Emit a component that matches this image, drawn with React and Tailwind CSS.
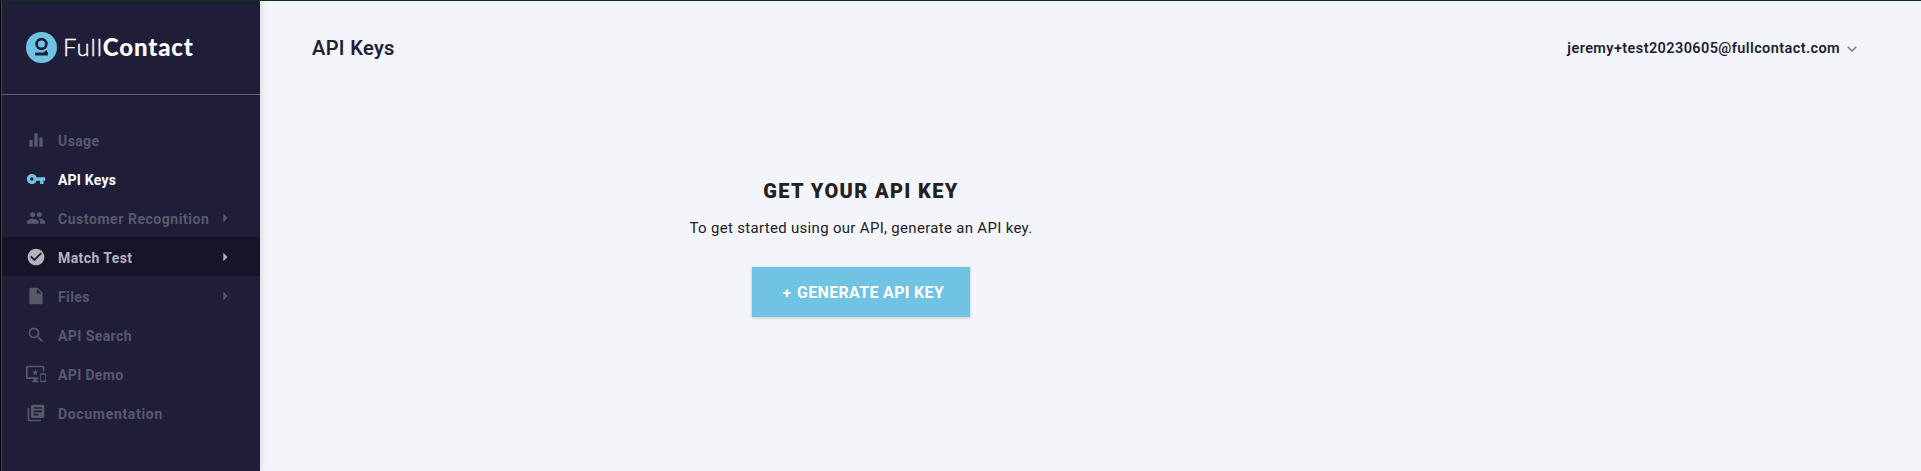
import React from "react";
import {
  MdEqualizer,
  MdVpnKey,
  MdPeople,
  MdCheckCircle,
  MdInsertDriveFile,
  MdSearch,
  MdImportantDevices,
  MdLibraryBooks,
  MdArrowRight,
} from "react-icons/md";

const items = [
  { label: "Usage", Icon: MdEqualizer, spacing: "tracking-[0.4px]" },
  { label: "API Keys", Icon: MdVpnKey, active: true, spacing: "tracking-[0.2px]" },
  { label: "Customer Recognition", Icon: MdPeople, arrow: true, spacing: "tracking-[0.55px]" },
  { label: "Match Test", Icon: MdCheckCircle, arrow: true, hover: true, spacing: "tracking-[0.42px]" },
  { label: "Files", Icon: MdInsertDriveFile, arrow: true, spacing: "tracking-[0.4px]" },
  { label: "API Search", Icon: MdSearch, spacing: "tracking-[0.42px]" },
  { label: "API Demo", Icon: MdImportantDevices, spacing: "tracking-[0.35px]" },
  { label: "Documentation", Icon: MdLibraryBooks, spacing: "tracking-[0.68px]" },
];

function Logo() {
  return (
    <div className="flex h-[93px] items-center pl-6">
      <svg className="h-[31px] w-[31px] shrink-0" viewBox="0 0 31 31">
        <circle cx="15.5" cy="15.5" r="15.5" fill="#6fc3e3" />
        <circle cx="15.5" cy="12" r="4.9" fill="none" stroke="#201d38" strokeWidth="2.7" />
        <path d="M9.2 20.4H17.5L20.3 18L21.9 20.4V23.6H9.2Z" fill="#201d38" />
      </svg>
      <div className="-mt-px ml-[6px] flex whitespace-nowrap font-['Lato',sans-serif] text-[24px] leading-[30px] text-white">
        <span className="font-light tracking-[0.85px] [-webkit-text-stroke:0.35px_white]">Full</span>
        <span className="font-black tracking-[0.87px]">Contact</span>
      </div>
    </div>
  );
}

function NavItem({ label, Icon, active, hover, arrow, spacing }) {
  const tone = active ? "text-white" : hover ? "text-[#b4b3bc]" : "text-[#575a69]";
  return (
    <a className={`flex h-[39px] items-center pl-6 ${tone} ${hover ? "bg-[#17142a]" : ""}`}>
      <Icon className={`h-5 w-5 shrink-0 ${active ? "text-[#6fc3e3]" : ""}`} />
      <span className={`mt-[3px] ml-3 whitespace-nowrap text-[14px] leading-5 font-bold ${spacing}`}>{label}</span>
      {arrow && <MdArrowRight className="mr-[25px] ml-auto h-5 w-5 shrink-0" />}
    </a>
  );
}

export default function App() {
  return (
    <div className="flex h-[471px] w-[1921px] overflow-hidden border-t border-l border-t-[#12301c] border-l-black bg-[#f4f5fa] font-['Roboto',sans-serif]">
      <aside className="flex w-[259px] shrink-0 flex-col border-l border-l-[#4a4a50] bg-[#201d38] shadow-[1px_0_6px_rgba(0,0,0,0.12)]">
        <Logo />
        <div className="h-px bg-[#62606f]" />
        <nav className="flex flex-col pt-[25px]">
          {items.map((item) => (
            <NavItem key={item.label} {...item} />
          ))}
        </nav>
      </aside>
      <div className="flex flex-1 flex-col">
        <header className="flex h-[94px] items-center justify-between pr-[64px] pl-[52px]">
          <h1 className="text-[20px] leading-6 font-medium tracking-[0.38px] text-[#201d38] [-webkit-text-stroke:0.2px_#201d38]">API Keys</h1>
          <div className="flex items-center pt-px text-[#201d38]">
            <span className="pt-px text-[14.5px] leading-5 font-semibold tracking-[0.4px]">jeremy+test20230605@fullcontact.com</span>
            <svg className="ml-[7px] h-[6px] w-[10px]" viewBox="0 0 10 6" fill="none" stroke="#757575" strokeWidth="1.4">
              <path d="M0.7 0.7L5 5L9.3 0.7" />
            </svg>
          </div>
        </header>
        <main className="flex w-[1202px] flex-col items-center pt-[84px] text-[#212121]">
          <h2 className="text-[20px] leading-6 font-black tracking-[1.35px]">GET YOUR API KEY</h2>
          <p className="mt-[15px] text-[15px] leading-5 tracking-[0.31px]">To get started using our API, generate an API key.</p>
          <button className="mt-[29px] flex h-[50px] w-[218px] items-center justify-center bg-[#70c3e3] pt-px pl-[5px] text-[16px] leading-5 font-bold text-white shadow-[0_1px_3px_rgba(0,0,0,0.2)]">
            <span className="mr-[6px] text-[15px]">+</span>
            <span className="tracking-[0.33px]">GENERATE API KEY</span>
          </button>
        </main>
      </div>
    </div>
  );
}
